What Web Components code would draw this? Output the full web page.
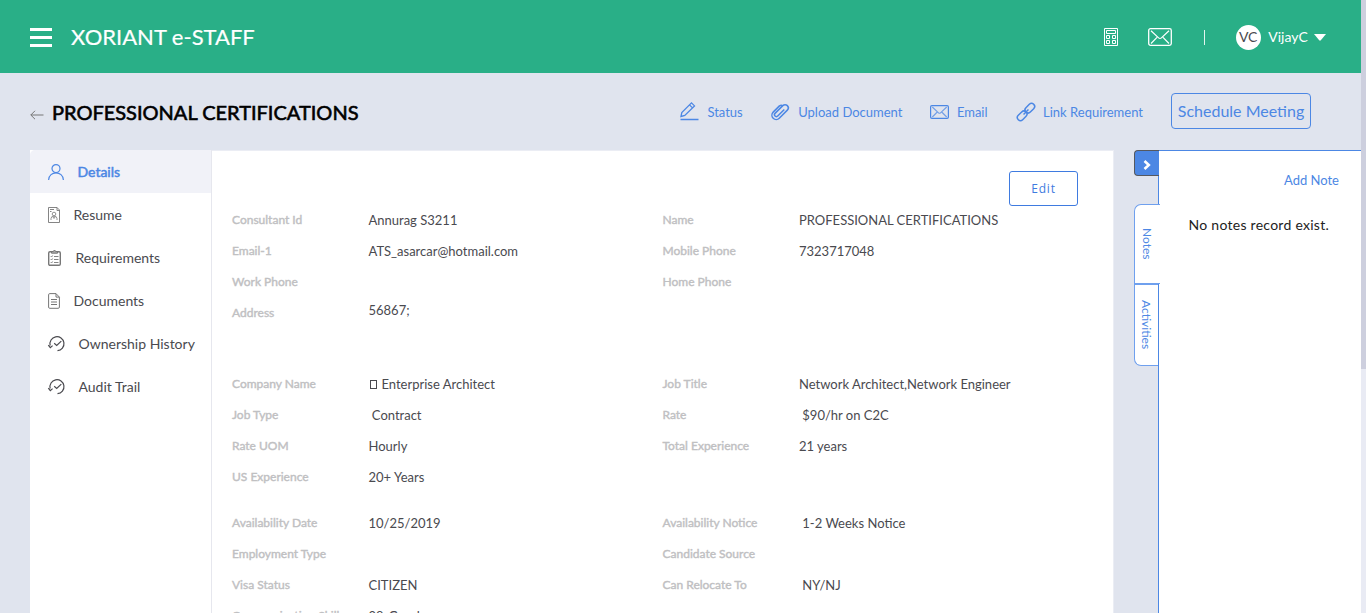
<!DOCTYPE html>
<html lang="en">
<head>
<meta charset="utf-8">
<title>e-STAFF</title>
<style>
html,body{margin:0;height:100%;overflow:hidden;background:#e0e4ee;font-family:Lato,"Liberation Sans",sans-serif;color:#4a4a4f}
</style>
</head>
<body>
<staff-app></staff-app>
<script>
const define = (name, css, html) => customElements.define(name, class extends HTMLElement {
  connectedCallback() {
    if (this.shadowRoot) return;
    const t = document.createElement('template');
    t.innerHTML = `<style>*{box-sizing:border-box}${css}</style>` + (typeof html === 'function' ? html(this) : html);
    this.attachShadow({mode: 'open'}).append(t.content.cloneNode(true));
  }
});

const icons = {
  menu: [22, 19, '<path d="M0 1.5h22M0 9.5h22M0 17.5h22" stroke-width="3"/>'],
  back: [14, 10, '<path d="M13.5 5H.8M5 .8.8 5 5 9.2" stroke-width="1"/>'],
  calc: [14, 18, '<path d="M.5.5h13v17H.5zM2.5 2.5h9v3h-9zM2.5 7.5h3v3h-3zM8.5 7.5h3v3h-3zM2.5 12.5h3v3h-3zM8.5 12.5h3v3h-3z" stroke-width="1"/>'],
  mail: [24, 18, '<rect x=".7" y=".7" width="22.6" height="16.6" rx="1.8" stroke-width="1.3"/><path d="M3 2.7l7.6 7.2q1.4 1.2 2.8 0L21 2.7M3 15.5l6-6.2M21 15.5l-6-6.2" stroke-width="1.2"/>'],
  mailSmall: [19, 14, '<rect x=".6" y=".6" width="17.8" height="12.8" rx="1.3" stroke-width="1.2"/><path d="M2.3 2l6.2 5.8q1 .9 2 0L16.7 2M2.3 12l5-5M16.7 12l-5-5" stroke-width="1.1" opacity=".75"/>'],
  pencil: [19, 19, '<path d="M1 14.5l.8-4L11.5.9l3 3L4.8 13.5zM9.5 2.9l3 3" stroke-width="1.3"/><path d="M.5 17.5h18" stroke-width="1.5"/>'],
  clip: [20, 19, '<g transform="translate(9.2 10.2) rotate(45)"><path d="M-4.3-5v9.2a4.300 4.300 0 0 0 8.600 0V-7.200a3.200 3.200 0 0 0-6.400 0V3.800a1.500 1.500 0 0 0 3.800 0V-5.500" stroke-width="1.5"/><path d="M-4.3-4.5q.3-2.500 2.400-2.500" stroke-width="1.4"/></g>'],
  link: [20, 20, '<g transform="rotate(-45 10 10)" stroke-width="1.5"><rect x="-.9" y="6.9" width="11" height="6.2" rx="3.1"/><rect x="9.9" y="6.9" width="11" height="6.2" rx="3.1"/><path d="M6.5 10h7"/></g>'],
  user: [16, 16, '<circle cx="8" cy="4.6" r="4"/><path d="M.6 16c.3-9.6 14.5-9.6 14.8 0"/>'],
  resume: [12, 16, '<path d="M.5.5h8.5l2.500 2.500v12.500H.5zM9 .5v3h2.500M2 2.500h4M2 4.500h1.500" stroke-width=".9"/><circle cx="6" cy="7" r="1.8" stroke-width=".8"/><path d="M3 13v-1.500q0-2.300 3-2.300t3 2.300V13M5 10l1 1.500 1-1.500" stroke-width=".8"/>'],
  board: [13, 17, '<rect x=".7" y="2.7" width="11.6" height="13.6" rx="1.3" stroke-width="1.4"/><path d="M3.5 4.2V2.500h1.700q1.300-3 2.600 0h1.700v1.700z" fill="#aaa" stroke-width="1"/><path d="M2.800 7.200l.8.800 1-1.500M6 7.500h4.500M2.800 10.200l.8.800 1-1.500M6 10.500h4.500M2.800 13.200l.8.800 1-1.500M6 13.500h4.500" stroke-width=".9"/>'],
  doc: [12, 16, '<path d="M1.800.6h6.200l3.400 3.500v10q0 1.200-1.200 1.200H1.800q-1.200 0-1.200-1.200v-12.300Q.6.6 1.800.6zM8 .7v3.400h3.300M3 6.500h6M3 9h6M3 11.500h6" stroke-width="1"/>'],
  history: [17, 17, '<path d="M2.200 10.500A7 7 0 1 1 9.500 15.700M.3 10.200l2 2.400 2.300-2M6.200 8.300l2.500 2.200 4.600-4.400" stroke-width="1.2"/>'],
  caret: [12, 7, '<path d="M0 0h12L6.800 6.300q-.8.700-1.600 0z" fill="currentColor" stroke="none"/>'],
  next: [8, 10, '<path d="M1.500 1 5.800 5 1.500 9" stroke-width="2.6"/>']
};
define('x-icon', ':host{display:block;flex:none}svg{display:block;overflow:visible}', e => {
  const [w, h, body] = icons[e.getAttribute('name')];
  return `<svg width="${w}" height="${h}" viewBox="0 0 ${w} ${h}" fill="none" stroke="currentColor" stroke-width="1.2">${body}</svg>`;
});

define('app-header', `
:host{display:flex;align-items:center;height:73px;background:#29af87;color:#fff;padding:1px 35px 0 30px}
h1{font-size:22px;font-weight:400;margin:0 auto 0 19px;line-height:26px;-webkit-text-stroke:.2px}
.mail{margin-left:30px}.bar{width:1px;height:15px;margin:0 31px 0 32px;background:#e3f5ef}
.av{width:25px;height:25px;margin-top:1px;border-radius:50%;background:#fff;color:#4a4a4f;font-size:14px;line-height:24px;text-align:center}
.name{font-size:14px;margin:-1px 6px 0 7.5px;letter-spacing:.05px}`,
`<x-icon name="menu"></x-icon><h1>XORIANT e-STAFF</h1><x-icon name="calc"></x-icon><x-icon class="mail" name="mail"></x-icon><span class="bar"></span><span class="av">VC</span><span class="name">VijayC</span><x-icon name="caret"></x-icon>`);

define('action-link', `:host{display:flex;align-items:center;color:#4c87e4;font-size:13px;white-space:nowrap}x-icon{margin-right:8px}:host([icon=pencil]) x-icon{margin-right:8.5px}:host([icon=link]) x-icon{margin-right:7px}`,
  e => `<x-icon name="${e.getAttribute('icon')}"></x-icon><slot></slot>`);

define('page-bar', `
:host{display:flex;align-items:center;height:77px;padding:0 50px 0 30px}
h2{margin:0 auto 0 8px;font-size:20px;line-height:24px;font-weight:400;color:#000;-webkit-text-stroke:.6px #000}
.back{color:#777;margin-top:7px}
action-link{margin-right:27.5px}
action-link[icon=mailSmall]{margin-right:28.5px}
action-link:last-of-type{margin-right:28px}
button{font:16px Lato,sans-serif;color:#4c87e4;background:none;border:1px solid #4c87e4;border-radius:4px;width:140px;height:36px;padding:0;margin-top:-2px;white-space:nowrap}`,
`<x-icon class="back" name="back"></x-icon><h2>PROFESSIONAL CERTIFICATIONS</h2>
<action-link icon="pencil">Status</action-link><action-link icon="clip">Upload Document</action-link><action-link icon="mailSmall">Email</action-link><action-link icon="link">Link Requirement</action-link><button>Schedule Meeting</button>`);

define('nav-item', `
:host{display:flex;align-items:center;height:43px;padding-left:18px;font-size:14px;color:#4a4a4f;white-space:nowrap}
x-icon{color:#777;margin-right:13.5px}
:host([icon=board]) x-icon{margin-right:14.5px}
:host([dark]) x-icon{color:#4a4a4f}
:host([active]){background:#f1f2f8;color:#4c87e4;-webkit-text-stroke:.5px #4c87e4;border-radius:5px 0 0 0}
:host([active]) x-icon{color:#4c87e4}`,
  e => `<x-icon name="${e.getAttribute('icon')}"></x-icon><slot></slot>`);

define('side-nav', `:host{display:block;width:182px;background:#fff;border-right:1px solid #e6e7ee}`,
`<nav-item active icon="user">Details</nav-item><nav-item icon="resume">Resume</nav-item><nav-item icon="board">Requirements</nav-item><nav-item icon="doc">Documents</nav-item><nav-item dark icon="history">Ownership History</nav-item><nav-item dark icon="history">Audit Trail</nav-item>`);

define('info-field', `
:host{display:grid;grid-template-columns:136.5px 1fr;height:31px;line-height:31px;font-size:13px;white-space:pre}
.label{font-size:12px;color:#c0c0c2;-webkit-text-stroke:.4px #c0c0c2;margin-top:-1px}
.box{display:inline-block;width:7px;height:9px;border:1px solid #4a4a4f;margin:0 5px 0 1px}
:host([raised]) .value{margin-top:-3px}`,
  e => `<span class="label">${e.getAttribute('label')}</span><span class="value">${e.hasAttribute('boxed') ? '<i class="box"></i>' : ''}<slot></slot></span>`);

const fields = rows => rows.map(([l, v, extra]) => l ? `<info-field label="${l}" ${extra || ''}>${v || ''}</info-field>` : '<span></span>').join('');
define('detail-panel', `
:host{display:block;width:902px;background:#fff;border-top:1px solid #ebedf4;border-right:1px solid #ebedf4;padding:20px 35px 0 20px;overflow:hidden}
.top{display:flex;justify-content:flex-end;height:34px}
button{flex:none;width:69px;height:35px;background:#fff;border:1px solid #3f7be0;border-radius:3px;color:#3f7be0;font:12px "Open Sans",sans-serif;letter-spacing:.8px;padding:0}
section{display:grid;grid-template-columns:430.5px 1fr}
.contact{height:164px;align-content:start}.job{margin-bottom:15px}`,
`<div class="top"><button>Edit</button></div>
<section class="contact">${fields([['Consultant Id','Annurag S3211'],['Name','PROFESSIONAL CERTIFICATIONS'],['Email-1','ATS_asarcar@hotmail.com'],['Mobile Phone','7323717048'],['Work Phone'],['Home Phone'],['Address','56867;','raised']])}</section>
<section class="job">${fields([['Company Name','Enterprise Architect','boxed'],['Job Title','Network Architect,Network Engineer'],['Job Type',' Contract'],['Rate',' $90/hr on C2C'],['Rate UOM','Hourly'],['Total Experience','21 years'],['US Experience','20+ Years'],[]])}</section>
<section>${fields([['Availability Date','10/25/2019'],['Availability Notice',' 1-2 Weeks Notice'],['Employment Type'],['Candidate Source'],['Visa Status','CITIZEN'],['Can Relocate To',' NY/NJ'],['Communication Skill','08-Good']])}</section>`);

define('notes-panel', `
:host{display:flex;width:227px;margin-left:20px}
.tabs{width:24px;position:relative;z-index:1;flex:none;font-size:12px;color:#4c87e4}
.toggle{display:flex;align-items:center;justify-content:center;height:26px;width:25px;padding-top:3px;background:#4c87e4;color:#fff;border:1px solid #55585f;border-right:0;border-radius:4px 0 0 4px;margin-bottom:28px}
.tab{display:flex;align-items:center;justify-content:center;writing-mode:vertical-rl;background:#fff;border:1px solid #6fa0ee;box-sizing:border-box}
.notes{height:80px;width:26px;border-right:0;border-radius:7px 0 0 0}
.acts{height:82px;width:24px;border-right:0;border-radius:0 0 0 7px;padding-bottom:1px}
.body{flex:1;background:#fff;border:1px solid #4c87e4;border-right:0;border-bottom:0;padding:19px 22px 0 30px}
.add{text-align:right;font-size:13px;line-height:20px;color:#4c87e4}
p{margin:25px 0 0 -.5px;color:#222;font-size:14px;line-height:20px;letter-spacing:.27px;white-space:nowrap}`,
`<div class="tabs"><div class="toggle"><x-icon name="next"></x-icon></div><div class="tab notes">Notes</div><div class="tab acts">Activities</div></div>
<div class="body"><div class="add">Add Note</div><p>No notes record exist.</p></div>`);

define('staff-app', `
:host{display:grid;grid-template-columns:1361px 5px;height:613px;overflow:hidden}
main{display:flex;flex-direction:column;height:613px;overflow:hidden}
.content{display:flex;flex:1;min-height:0;padding-left:30px}
.content>*{flex:none}
.scroll{background:#e9ebf4}.scroll i{display:block;height:369px;background:#cdcfde}`,
`<main><app-header></app-header><page-bar></page-bar><div class="content"><side-nav></side-nav><detail-panel></detail-panel><notes-panel></notes-panel></div></main><div class="scroll"><i></i></div>`);
</script>
</body>
</html>
